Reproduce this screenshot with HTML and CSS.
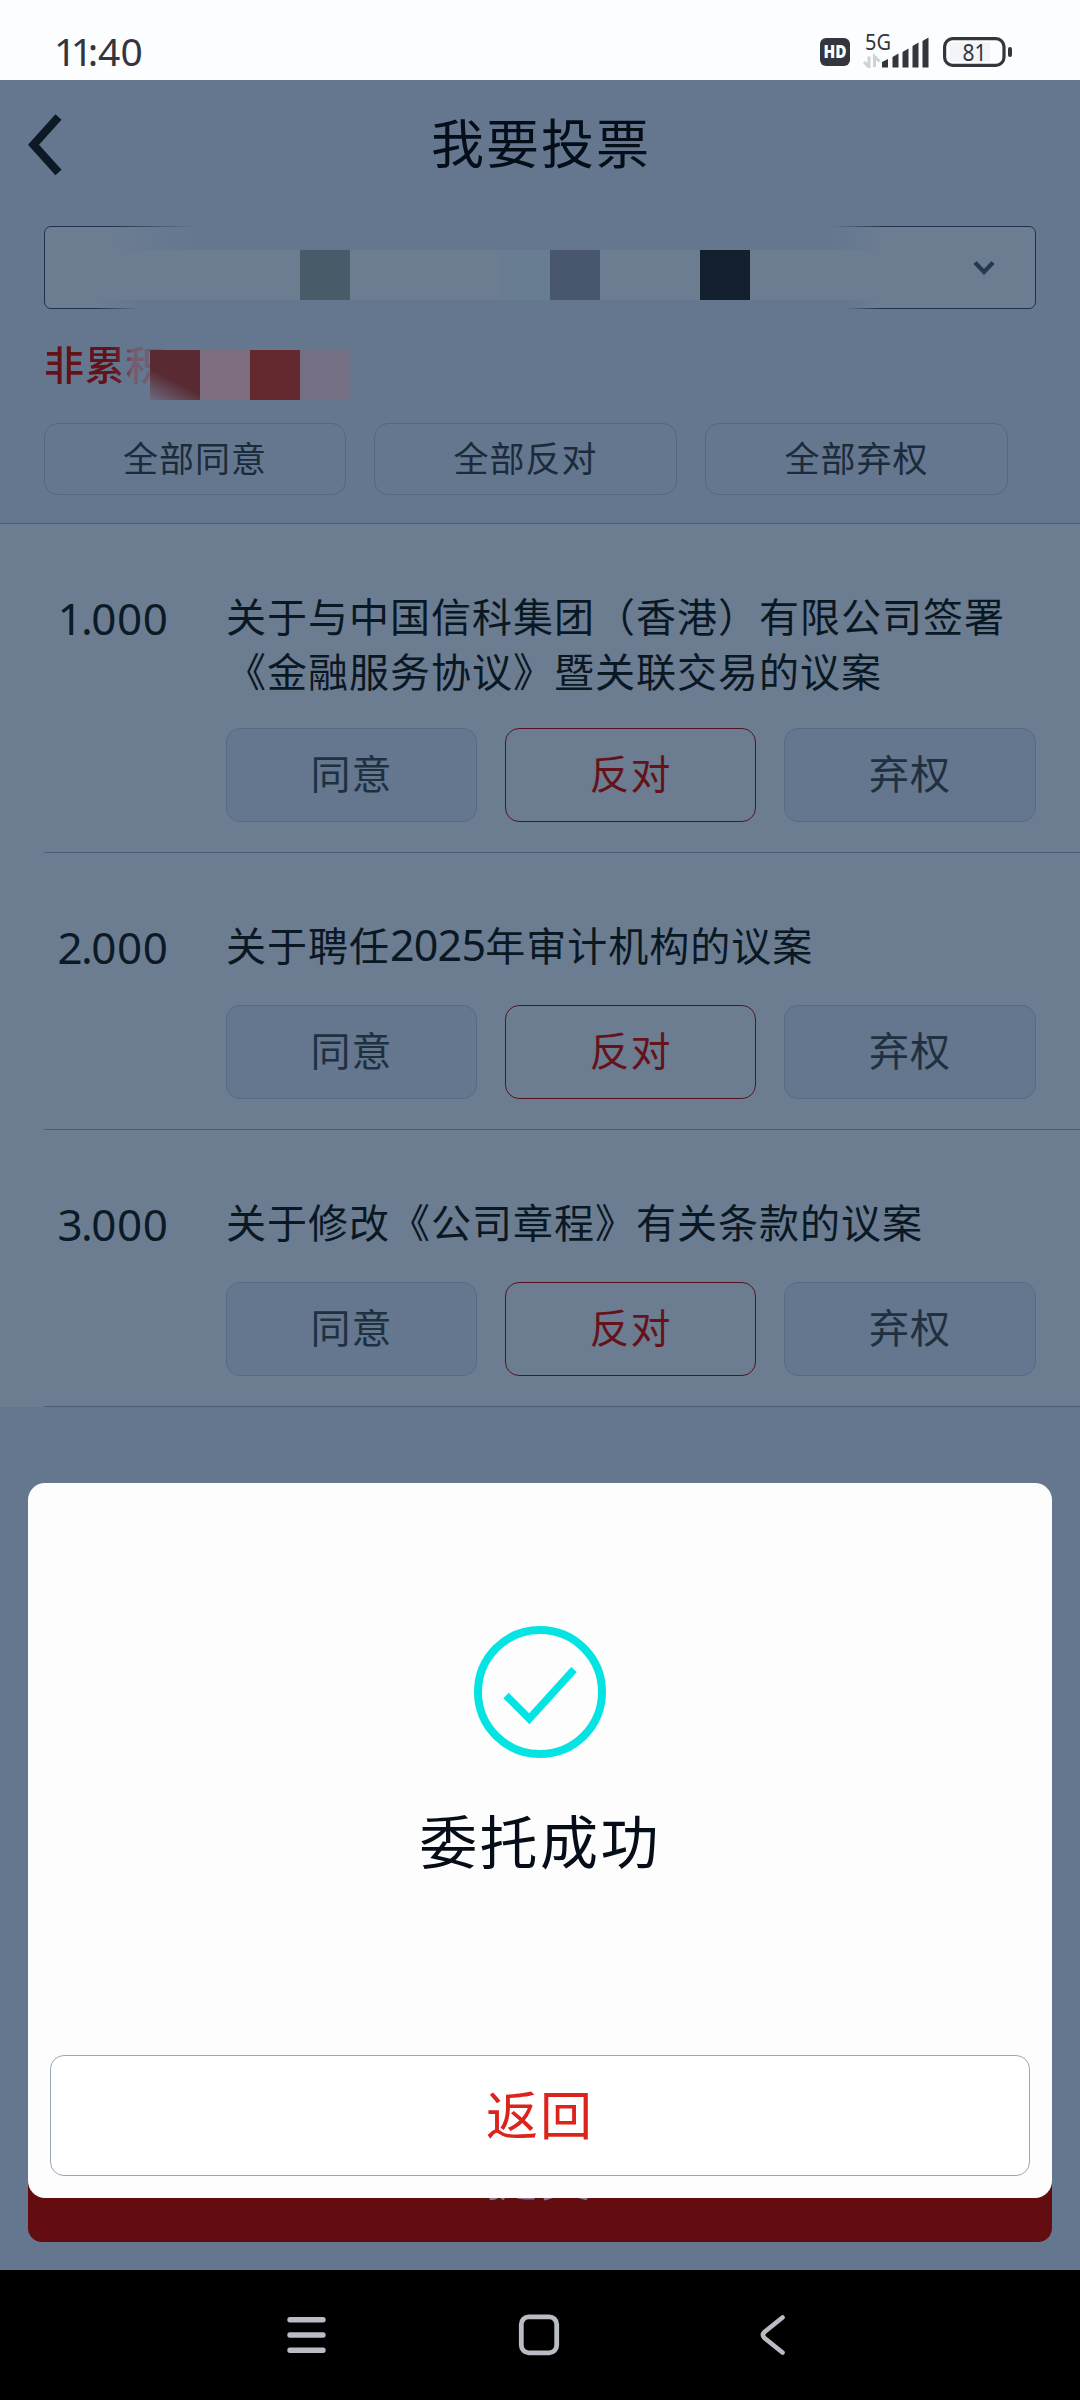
FILE: index.html
```html
<!DOCTYPE html>
<html lang="zh-CN">
<head>
<meta charset="utf-8">
<title>我要投票</title>
<link rel="stylesheet" href="styles.css">
</head>
<body>
<div class="phone">
  <div class="status">
    <span class="clock"><span class="tight">1</span><span class="tight">1</span>:40</span>
    <svg class="status-icons" width="196" height="50" viewBox="0 -16 196 50">
      <rect x="2" y="4" width="30" height="28" rx="6" fill="#33363d"/>
      <text x="17" y="23.5" class="hd" textLength="23" lengthAdjust="spacingAndGlyphs">HD</text>
      <text x="47" y="16" class="net" textLength="26" lengthAdjust="spacingAndGlyphs">5G</text>
      <path d="M51 22.500v10.500l-5-5M56.500 33v-10.500l5 5" fill="none" stroke="#cfd1d8" stroke-width="3"/>
      <path d="M64 28l6-3v8.500h-6zM74.500 23l6-3.500v14h-6zM84.500 18l6-3.500v19h-6zM94.500 12l6-3.500v25h-6zM104.500 7l6-3.500v30h-6z" fill="#33363d"/>
      <rect x="132" y="8.500" width="40" height="19" fill="#f3f4f8"/>
      <rect x="126.600" y="4.700" width="59.400" height="26.600" rx="8" fill="none" stroke="#33363d" stroke-width="3.200"/>
      <rect x="190" y="13" width="4" height="10" rx="2" fill="#33363d"/>
      <text x="156.500" y="27" class="level" textLength="24" lengthAdjust="spacingAndGlyphs">81</text>
    </svg>
  </div>

  <div class="page">
    <header class="bar">
      <svg class="back" width="34" height="62" viewBox="0 0 34 62"><path d="M30.500 3L5.500 30.800L30.500 58.500" fill="none" stroke="#0d1a26" stroke-width="8.200"/></svg>
      <h1 class="title">我要投票</h1>
    </header>

    <div class="filters">
      <div class="select">
        <div class="veil veil-top"></div>
        <div class="veil veil-bottom"></div>
        <i class="tile tile-a"></i><i class="tile tile-b"></i><i class="tile tile-c"></i><i class="tile tile-d"></i>
        <svg class="caret" width="24" height="18" viewBox="0 0 24 18"><path d="M3 3.500L12 13L21 3.500" fill="none" stroke="#26394f" stroke-width="4.200"/></svg>
      </div>
      <div class="kind">
        <span class="kind-text">非累积</span>
        <div class="mosaic"><i></i><i></i><i></i><i></i></div>
      </div>
      <div class="bulk">
        <div class="bulk-btn">全部同意</div>
        <div class="bulk-btn">全部反对</div>
        <div class="bulk-btn">全部弃权</div>
      </div>
    </div>

    <div class="list">
      <section class="item item-first">
        <div class="no">1<span class="dot">.</span>000</div>
        <div class="body">
          <p class="name">关于与中国信科集团（香港）有限公司签署<br>《金融服务协议》暨关联交易的议案</p>
          <div class="opts"><div class="opt">同意</div><div class="opt on">反对</div><div class="opt">弃权</div></div>
        </div>
      </section>
      <section class="item">
        <div class="no">2<span class="dot">.</span>000</div>
        <div class="body">
          <p class="name">关于聘任<span class="year">2025</span>年审计机构的议案</p>
          <div class="opts"><div class="opt">同意</div><div class="opt on">反对</div><div class="opt">弃权</div></div>
        </div>
      </section>
      <section class="item">
        <div class="no">3<span class="dot">.</span>000</div>
        <div class="body">
          <p class="name">关于修改《公司章程》有关条款的议案</p>
          <div class="opts"><div class="opt">同意</div><div class="opt on">反对</div><div class="opt">弃权</div></div>
        </div>
      </section>
    </div>

    <div class="submit">提交</div>

    <div class="modal">
      <svg class="ok" width="132" height="132" viewBox="0 0 132 132"><circle cx="66" cy="66" r="62" fill="none" stroke="#05e3e3" stroke-width="8"/><path d="M32 69.500L55.300 92.700L100 43.500" fill="none" stroke="#05e3e3" stroke-width="7.600"/></svg>
      <div class="msg">委托成功</div>
      <div class="return">返回</div>
    </div>
  </div>

  <nav class="nav">
    <svg width="1080" height="130" viewBox="0 0 1080 130" fill="none" stroke="#b9bcc5" stroke-linecap="round">
      <path d="M290 49.700H323M290 65H323M290 80.300H323" stroke-width="5.400"/>
      <rect x="521.300" y="46.800" width="35.400" height="36" rx="7.500" stroke-width="4.800"/>
      <path d="M782.500 47.500L764.500 62Q761.500 65 764.500 68L782.500 82.500" stroke-width="4.600"/>
    </svg>
  </nav>
</div>
</body>
</html>
```
FILE: styles.css
```css
* { box-sizing: border-box; }
body { margin: 0; font-family: "Noto Sans CJK SC", sans-serif; }
.phone { width: 1080px; height: 2400px; display: flex; flex-direction: column; overflow: hidden; }

.status { height: 80px; background: #fcfdff; display: flex; justify-content: space-between; align-items: flex-start; padding: 18px 66px 0 54px; }
.clock { margin-top: 14px; font: 39px/38px "Noto Sans", sans-serif; color: #33363d; }
.tight { letter-spacing: -5.5px; }
.hd { font: 800 18px "Open Sans", sans-serif; fill: #fff; text-anchor: middle; }
.net { font: 21px "Noto Sans", sans-serif; fill: #33363d; }
.level { font: 24px "Noto Sans", sans-serif; fill: #33363d; text-anchor: middle; }

.page { position: relative; height: 2190px; background: #64778f; display: flex; flex-direction: column; }
.bar { height: 146px; padding: 34px 0 0 28px; display: flex; align-items: flex-start; }
.back { display: block; }
.title { flex: 1; margin: -6px 60px 0 0; text-align: center; font-size: 53px; font-weight: 400; line-height: 66px; letter-spacing: 2px; color: #040d18; }

.filters { height: 298px; padding: 0 44px; border-bottom: 1px solid #455b70; }
.select { position: relative; height: 83px; border: 1px solid #1f314a; border-radius: 7px; background: #6c7d92; display: flex; justify-content: flex-end; align-items: center; padding: 0 39px 0 0; }
.veil { position: absolute; }
.veil-top { left: 65px; width: 775px; top: -1px; height: 24px; background: linear-gradient(90deg, #64778f00, #64778f 85px, #64778f 722px, #64778f00); }
.veil-bottom { left: 50px; width: 785px; bottom: -1px; height: 9px; background: linear-gradient(90deg, #64778f00, #64778f 45px, #64778f 750px, #64778f00); }
.tile { position: absolute; top: 23px; width: 50px; height: 50px; }
.tile-a { left: 255px; background: #485b69; }
.tile-b { left: 455px; background: #697d92; }
.tile-c { left: 505px; background: #48576d; }
.tile-d { left: 655px; background: #15202e; }

.kind { position: relative; height: 114px; padding: 25px 0 0; }
.kind-text { display: block; width: 124px; font-size: 40px; font-weight: 500; line-height: 58px; letter-spacing: .8px; background: linear-gradient(90deg, #651118 65px, #6a2430 80px, #765c6d 88px, #745f72); background-clip: text; color: transparent; }
.mosaic { position: absolute; left: 106px; top: 41px; display: flex; }
.mosaic i { width: 50px; height: 50px; background: #7e6e80; }
.mosaic i:nth-child(1) { background: linear-gradient(28deg, #6a6478 5%, #592a32 42%); }
.mosaic i:nth-child(3) { background: #64282f; }
.mosaic i:nth-child(4) { background: #756f84; }

.bulk { display: grid; grid-template-columns: 302px 303px 303px; gap: 28px; }
.bulk-btn { height: 72px; border: 1px solid #54677f; border-radius: 14px; text-align: center; font-size: 35px; line-height: 66px; letter-spacing: 1px; color: #1b2b3b; }

.list { background: #6c7d92; }
.item { margin-left: 44px; border-bottom: 1px solid #4a5e78; padding: 64px 44px 30px 0; display: flex; }
.no { width: 138px; margin-right: 44px; text-align: center; font: 44px/60px "Noto Sans", sans-serif; letter-spacing: .6px; color: #0c1a26; }
.dot { margin: 0 -2.2px; }
.body { flex: 1; }
.name { margin: 0 0 33px; font-size: 40px; line-height: 55px; letter-spacing: 1px; color: #0a1824; white-space: nowrap; }
.item-first .name { margin-bottom: 30px; }
.year { font: 43px/1 "Noto Sans", sans-serif; letter-spacing: -.8px; }
.opts { display: grid; grid-template-columns: 251px 251px 252px; gap: 28px; }
.opt { height: 94px; border: 1px solid #566a87; border-radius: 14px; background: #64778f; text-align: center; font-size: 40px; line-height: 87px; letter-spacing: .9px; color: #1f3040; }
.opt.on { background: none; border-color: #54131f; color: #65131a; }

.submit { position: absolute; left: 28px; top: 2032px; width: 1024px; height: 130px; border-radius: 14px; background: #640d10; color: #8d7d8b; text-align: center; font-size: 51px; line-height: 125px; letter-spacing: 3px; }
.modal { position: absolute; left: 28px; top: 1403px; width: 1024px; height: 715px; border-radius: 17px; background: #fdfdfe; padding: 143px 22px 0; display: flex; flex-direction: column; align-items: center; }
.msg { margin-top: 36px; height: 92px; font-size: 58px; line-height: 90px; letter-spacing: 2.4px; color: #040d18; }
.return { width: 980px; height: 121px; margin-top: 169px; border: 1px solid #9aa6b3; border-radius: 14px; background: #fff; text-align: center; font-size: 52px; line-height: 114px; letter-spacing: 2px; color: #dc241d; }

.nav { height: 130px; background: #000; }
.nav svg { display: block; }
```
